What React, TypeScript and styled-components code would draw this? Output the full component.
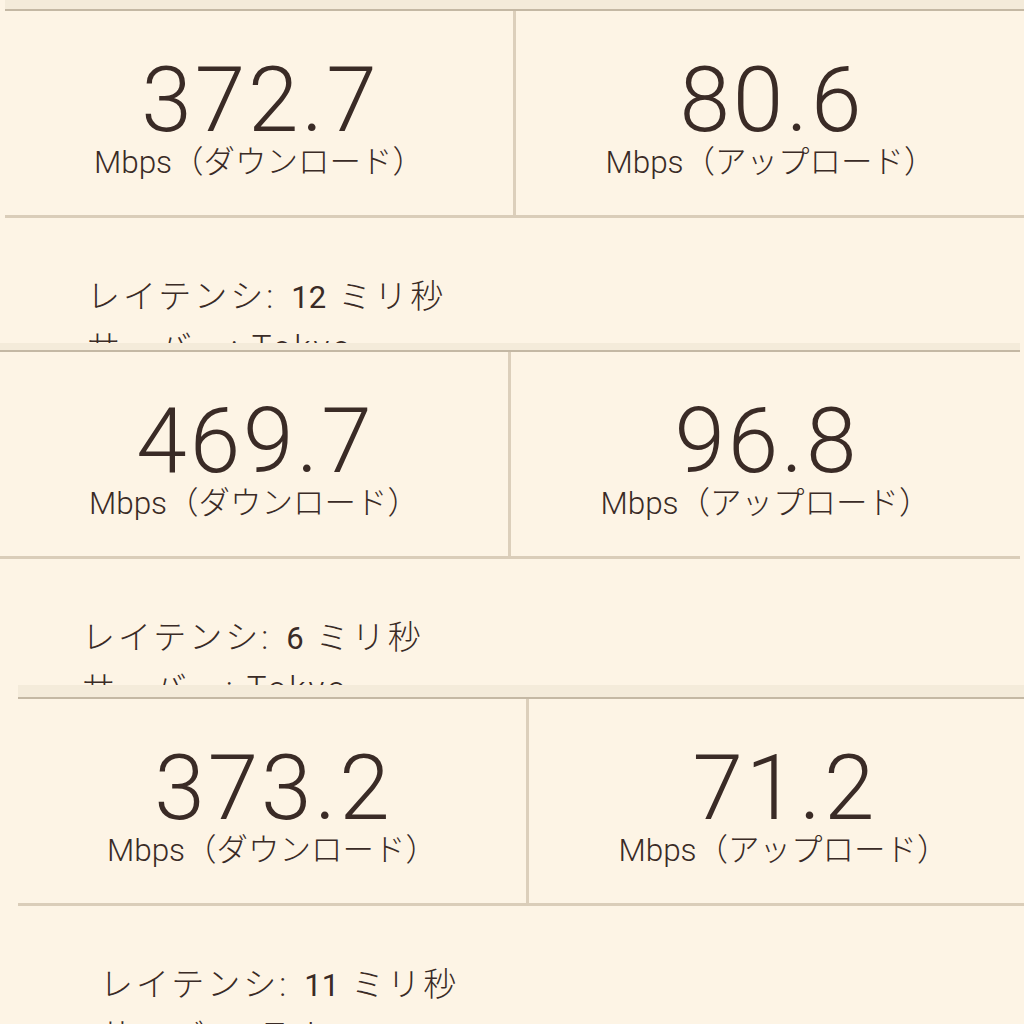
import * as React from "react";
import styled, { createGlobalStyle } from "styled-components";

const GlobalStyle = createGlobalStyle`
  html, body {
    margin: 0;
    padding: 0;
    background: #fdf4e5;
  }
  body {
    width: 1024px;
    height: 1024px;
    overflow: hidden;
  }
`;

const Page = styled.main`
  width: 1024px;
  height: 1024px;
  overflow: hidden;
  background: #fdf4e5;
  color: #3a2b26;
  display: flex;
  flex-direction: column;
`;

// each slice is one cropped screenshot of the result card
const Slice = styled.section<{ $height: number; $offset: number }>`
  flex: none;
  height: ${(p) => p.$height}px;
  overflow: hidden;
  padding-left: ${(p) => p.$offset}px;
`;

const Card = styled.div`
  width: 1020px;
`;

const Strip = styled.div<{ $height: number }>`
  height: ${(p) => p.$height}px;
  background: #f4ebda;
`;

const Results = styled.div`
  display: grid;
  grid-template-columns: 511px 1fr;
  height: 204px;
  border-top: 2px solid #c4b8a4;
  border-bottom: 3px solid #dacdb9;
`;

const Column = styled.div<{ $divider?: boolean }>`
  display: flex;
  flex-direction: column;
  align-items: center;
  padding-top: 44px;
  border-right: ${(p) => (p.$divider ? "3px solid #dccfbb" : "none")};
`;

const Speed = styled.div`
  font-family: Roboto, "Liberation Sans", sans-serif;
  font-weight: 300;
  font-size: 91px;
  line-height: 90px;
  letter-spacing: 3px;
  padding-left: 3px;
`;

const Unit = styled.div`
  font-family: Roboto, "Noto Sans CJK JP", sans-serif;
  font-weight: 300;
  font-size: 31.5px;
  line-height: 36px;
  white-space: nowrap;
`;

const Details = styled.div`
  padding: 54px 0 0 82px;
  font-family: Roboto, "Noto Sans CJK JP", sans-serif;
  font-weight: 300;
  font-size: 33px;
  letter-spacing: 3px;
  line-height: 50px;
  white-space: nowrap;
`;

const Figure = styled.span`
  font-weight: 400;
  font-size: 31px;
  letter-spacing: 0;
  margin: 0 12px 0 15px;
`;

type Result = {
  down: string;
  up: string;
  latency: string;
  height: number;
  offset: number;
  strip: number;
};

const results: Result[] = [
  { down: "372.7", up: "80.6", latency: "12", height: 343, offset: 5, strip: 9 },
  { down: "469.7", up: "96.8", latency: "6", height: 342, offset: 0, strip: 7 },
  { down: "373.2", up: "71.2", latency: "11", height: 339, offset: 18, strip: 12 },
];

function ResultSlice({ r }: { r: Result }) {
  return (
    <Slice $height={r.height} $offset={r.offset}>
      <Card>
        <Strip $height={r.strip} />
        <Results>
          <Column $divider>
            <Speed>{r.down}</Speed>
            <Unit>Mbps（ダウンロード）</Unit>
          </Column>
          <Column>
            <Speed>{r.up}</Speed>
            <Unit>Mbps（アップロード）</Unit>
          </Column>
        </Results>
        <Details>
          <div>
            レイテンシ:<Figure>{r.latency}</Figure>ミリ秒
          </div>
          <div>サーバー: Tokyo</div>
        </Details>
      </Card>
    </Slice>
  );
}

export default function App() {
  return (
    <>
      <GlobalStyle />
      <Page>
        {results.map((r, i) => (
          <ResultSlice key={i} r={r} />
        ))}
      </Page>
    </>
  );
}
